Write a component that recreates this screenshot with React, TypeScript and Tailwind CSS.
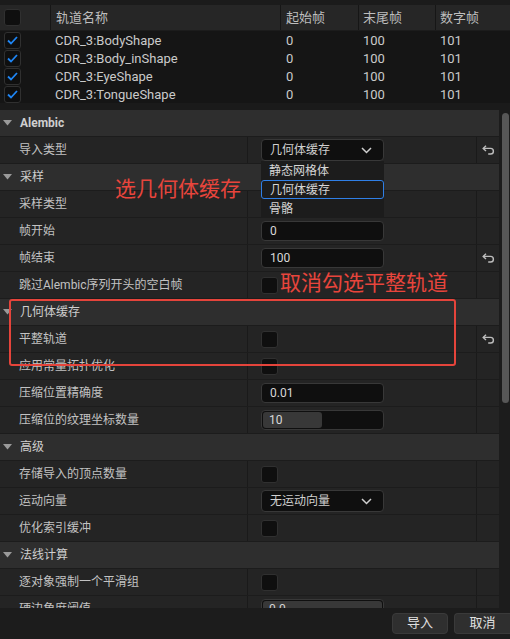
import React from "react";

// 表格資料 / track table data
const tracks = [
  { name: "CDR_3:BodyShape", start: "0", end: "100", frames: "101" },
  { name: "CDR_3:Body_inShape", start: "0", end: "100", frames: "101" },
  { name: "CDR_3:EyeShape", start: "0", end: "100", frames: "101" },
  { name: "CDR_3:TongueShape", start: "0", end: "100", frames: "101" },
];

type Value =
  | { type: "dropdown"; text: string }
  | { type: "input"; text: string }
  | { type: "slider"; text: string; fill: number }
  | { type: "checkbox" }
  | { type: "none" };

type Row =
  | { kind: "section"; label: string; bold?: boolean }
  | { kind: "prop"; label: string; value: Value; reset?: boolean };

const rows: Row[] = [
  { kind: "section", label: "Alembic", bold: true },
  { kind: "prop", label: "导入类型", value: { type: "dropdown", text: "几何体缓存" }, reset: true },
  { kind: "section", label: "采样" },
  { kind: "prop", label: "采样类型", value: { type: "none" } },
  { kind: "prop", label: "帧开始", value: { type: "input", text: "0" } },
  { kind: "prop", label: "帧结束", value: { type: "input", text: "100" }, reset: true },
  { kind: "prop", label: "跳过Alembic序列开头的空白帧", value: { type: "checkbox" } },
  { kind: "section", label: "几何体缓存" },
  { kind: "prop", label: "平整轨道", value: { type: "checkbox" }, reset: true },
  { kind: "prop", label: "应用常量拓扑优化", value: { type: "checkbox" } },
  { kind: "prop", label: "压缩位置精确度", value: { type: "input", text: "0.01" } },
  { kind: "prop", label: "压缩位的纹理坐标数量", value: { type: "slider", text: "10", fill: 59 } },
  { kind: "section", label: "高级" },
  { kind: "prop", label: "存储导入的顶点数量", value: { type: "checkbox" } },
  { kind: "prop", label: "运动向量", value: { type: "dropdown", text: "无运动向量" } },
  { kind: "prop", label: "优化索引缓冲", value: { type: "checkbox" } },
  { kind: "section", label: "法线计算" },
  { kind: "prop", label: "逐对象强制一个平滑组", value: { type: "checkbox" } },
  { kind: "prop", label: "硬边角度阈值", value: { type: "slider", text: "0.0", fill: 130 } },
];

const Triangle = () => (
  <svg width="9" height="6" viewBox="0 0 9 6" className="shrink-0">
    <polygon points="0,0 9,0 4.5,5.5" fill="#9a9a9a" />
  </svg>
);

const Chevron = () => (
  <svg width="11" height="7" viewBox="0 0 11 7">
    <polyline points="1,1 5.5,5.5 10,1" fill="none" stroke="#cfcfcf" strokeWidth="1.5" />
  </svg>
);

const ResetIcon = () => (
  <svg width="13" height="10" viewBox="0 0 13 10">
    <polyline points="4,0.8 1.2,3.4 4,6" fill="none" stroke="#bdbdbd" strokeWidth="1.4" />
    <path d="M1.3 3.4 H8.6 A2.8 2.8 0 0 1 8.6 9 H6.2" fill="none" stroke="#bdbdbd" strokeWidth="1.4" />
  </svg>
);

const CheckBox = ({ checked = false }: { checked?: boolean }) => (
  <div className="w-[17px] h-[17px] rounded-[3px] bg-[#0f0f0f] border border-[#303030] flex items-center justify-center">
    {checked && (
      <svg width="11" height="9" viewBox="0 0 11 9">
        <polyline points="1,4.5 4,7.5 10,1" fill="none" stroke="#1f86f5" strokeWidth="1.8" />
      </svg>
    )}
  </div>
);

const ValueCell = ({ value }: { value: Value }) => {
  if (value.type === "dropdown") {
    return (
      <div className="w-[123px] h-[22px] rounded-[4px] bg-[#0f0f0f] border border-[#383838] flex items-center justify-between pl-[8px] pr-[11px] text-[12px] text-[#d0d0d0]">
        <span>{value.text}</span>
        <Chevron />
      </div>
    );
  }
  if (value.type === "input") {
    return (
      <div className="w-[123px] h-[20px] rounded-[4px] bg-[#0f0f0f] border border-[#383838] flex items-center pl-[8px] text-[12px] text-[#d8d8d8]">
        {value.text}
      </div>
    );
  }
  if (value.type === "slider") {
    return (
      <div className="w-[123px] h-[20px] rounded-[4px] bg-[#0f0f0f] border border-[#383838] flex items-stretch p-px">
        <div
          className="rounded-[3px] bg-[#383838] flex items-center pl-[6px] text-[12px] text-[#d8d8d8]"
          style={{ width: value.fill }}
        >
          {value.text}
        </div>
      </div>
    );
  }
  if (value.type === "checkbox") return <CheckBox />;
  return null;
};

export default function App() {
  return (
    <div
      className="relative w-[510px] h-[639px] overflow-hidden bg-[#1a1a1a] text-[#c4c4c4]"
      style={{ fontFamily: '"Roboto", "Noto Sans CJK SC", sans-serif' }}
    >
      {/* 上方軌道表 / track table */}
      <div className="h-[5px] bg-[#1b1b1b]" />
      <div className="grid grid-cols-[51px_230px_78px_77px_1fr] h-[26px] bg-[#262626] border-b border-[#1c1c1c] text-[13px] text-[#bdbdbd]">
        <div className="flex items-center pl-[4px] border-r border-[#161616]">
          <CheckBox />
        </div>
        <div className="flex items-center pl-[5px] border-r border-[#161616]">轨道名称</div>
        <div className="flex items-center pl-[5px] border-r border-[#161616]">起始帧</div>
        <div className="flex items-center pl-[4px] border-r border-[#161616]">末尾帧</div>
        <div className="flex items-center pl-[4px]">数字帧</div>
      </div>
      <div className="bg-[#151515] h-[72px]">
        {tracks.map((t) => (
          <div key={t.name} className="grid grid-cols-[51px_230px_78px_77px_1fr] h-[18px] text-[13px] text-[#cacaca]">
            <div className="flex items-center pl-[4px]">
              <CheckBox checked />
            </div>
            <div className="flex items-center pl-[4px]">{t.name}</div>
            <div className="flex items-center pl-[5px]">{t.start}</div>
            <div className="flex items-center pl-[4px]">{t.end}</div>
            <div className="flex items-center pl-[4px]">{t.frames}</div>
          </div>
        ))}
      </div>
      <div className="h-[7px] bg-[#1a1a1a]" />

      {/* 細節面板 / details panel */}
      <div className="flex h-[498px] overflow-hidden">
        <div className="flex-1 flex flex-col">
          {rows.map((r, i) =>
            r.kind === "section" ? (
              <div
                key={i}
                className="shrink-0 h-[27px] bg-[#2e2e2e] border-b border-[#1c1c1c] flex items-center gap-[8px] pl-[3px] text-[12px] text-[#cfcfcf]"
              >
                <Triangle />
                <span className={r.bold ? "font-bold" : ""}>{r.label}</span>
              </div>
            ) : (
              <div
                key={i}
                className="shrink-0 h-[27px] bg-[#242424] border-b border-[#1c1c1c] grid grid-cols-[248px_1fr_22px] text-[12px] text-[#c2c2c2]"
              >
                <div className="flex items-center pl-[19px] border-r border-[#1a1a1a]">{r.label}</div>
                <div className="flex items-center pl-[13px] border-r border-[#1a1a1a]">
                  <ValueCell value={r.value} />
                </div>
                <div className="flex items-center justify-center">{r.reset && <ResetIcon />}</div>
              </div>
            )
          )}
        </div>
        {/* 捲軸 / scrollbar */}
        <div className="w-[11px] bg-[#1c1c1c] pl-[3px] pr-[1px] pt-[3px]">
          <div className="h-[290px] rounded-full bg-[#575757]" />
        </div>
      </div>

      {/* 底部按鈕 / bottom buttons */}
      <div className="h-[31px] bg-[#1c1c1c] flex items-center justify-end gap-[6px] pb-[1px]">
        <button className="w-[56px] h-[21px] rounded-[4px] bg-[#2f2f2f] border border-[#3a3a3a] text-[13px] text-[#e0e0e0] flex items-center justify-center">
          导入
        </button>
        <button className="w-[56px] h-[21px] rounded-l-[4px] bg-[#2f2f2f] border border-r-0 border-[#3a3a3a] text-[13px] text-[#e0e0e0] flex items-center justify-center">
          取消
        </button>
      </div>

      {/* 下拉選單 / open dropdown menu */}
      <div className="absolute left-[261px] top-[161px] w-[123px] h-[57px] bg-[#1c1c1c] flex flex-col text-[12px] text-[#d6d6d6]">
        <div className="h-[19px] flex items-center pl-[8px]">静态网格体</div>
        <div className="h-[19px] flex items-center pl-[8px] rounded-[3px] border border-[#2f7fe6]">几何体缓存</div>
        <div className="h-[19px] flex items-center pl-[8px]">骨骼</div>
      </div>

      {/* 標註 / annotations */}
      <div className="absolute left-[115px] top-[175px] text-[21px] leading-[28px] text-[#e8453c]">选几何体缓存</div>
      <div className="absolute left-[280px] top-[269px] text-[21px] leading-[28px] text-[#e8453c]">取消勾选平整轨道</div>
      <div className="absolute left-[9px] top-[299px] w-[447px] h-[67px] border-2 border-[#e5443b] rounded-[3px]" />
    </div>
  );
}
